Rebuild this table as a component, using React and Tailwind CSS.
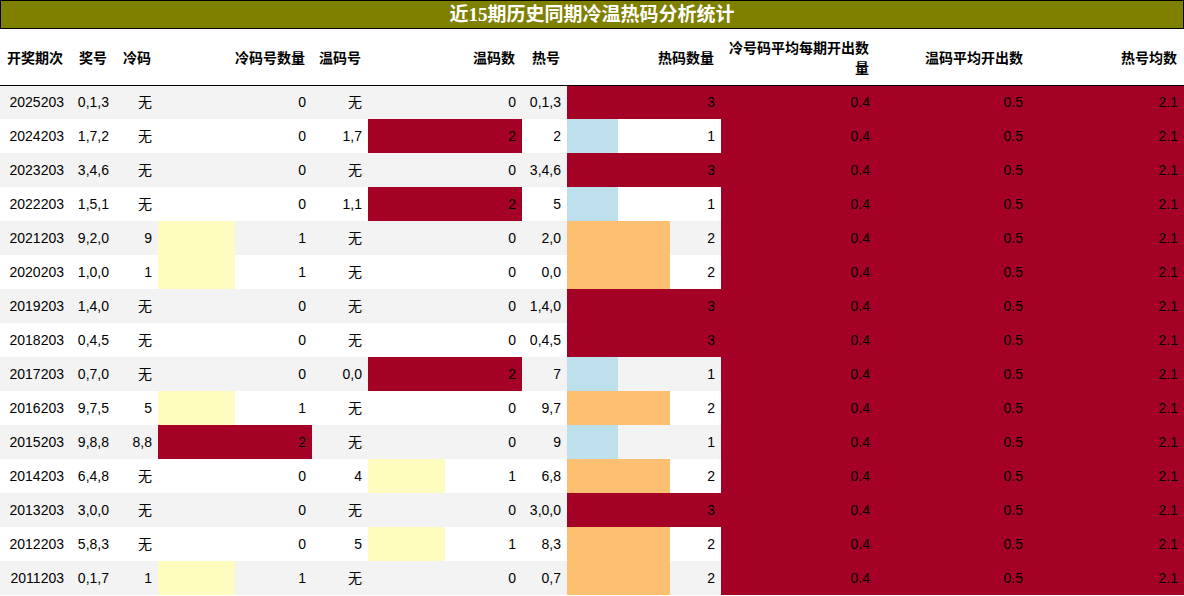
import React from "react";

const RED = "#a50026";
const YELLOW = "#fffcbf";
const BLUE = "#bde0ec";
const ORANGE = "#fdbf72";

const rows = [
  ["2025203", "0,1,3", "无", 0, "无", 0, "0,1,3", 3],
  ["2024203", "1,7,2", "无", 0, "1,7", 2, "2", 1],
  ["2023203", "3,4,6", "无", 0, "无", 0, "3,4,6", 3],
  ["2022203", "1,5,1", "无", 0, "1,1", 2, "5", 1],
  ["2021203", "9,2,0", "9", 1, "无", 0, "2,0", 2],
  ["2020203", "1,0,0", "1", 1, "无", 0, "0,0", 2],
  ["2019203", "1,4,0", "无", 0, "无", 0, "1,4,0", 3],
  ["2018203", "0,4,5", "无", 0, "无", 0, "0,4,5", 3],
  ["2017203", "0,7,0", "无", 0, "0,0", 2, "7", 1],
  ["2016203", "9,7,5", "5", 1, "无", 0, "9,7", 2],
  ["2015203", "9,8,8", "8,8", 2, "无", 0, "9", 1],
  ["2014203", "6,4,8", "无", 0, "4", 1, "6,8", 2],
  ["2013203", "3,0,0", "无", 0, "无", 0, "3,0,0", 3],
  ["2012203", "5,8,3", "无", 0, "5", 1, "8,3", 2],
  ["2011203", "0,1,7", "1", 1, "无", 0, "0,7", 2],
];

const widths = [70, 44, 44, 154, 56, 154, 45, 154, 155, 154, 154];

const headers = [
  "开奖期次",
  "奖号",
  "冷码",
  "冷码号数量",
  "温码号",
  "温码数",
  "热号",
  "热码数量",
  "冷号码平均每期开出数量",
  "温码平均开出数",
  "热号均数",
];

function barColor(value, max) {
  if (value === 0) return "transparent";
  if (max === 3) return value === 3 ? RED : value === 2 ? ORANGE : BLUE;
  return value === 2 ? RED : YELLOW;
}

function BarCell({ value, max }) {
  const pct = (value / max) * 100;
  const color = barColor(value, max);
  return (
    <td
      className="h-[34px] p-0 pr-[6px] text-right align-middle"
      style={{ background: `linear-gradient(to right, ${color} ${pct}%, transparent ${pct}%)` }}
    >
      {value}
    </td>
  );
}

export default function App() {
  return (
    <div
      className="w-[1184px] h-[596px] overflow-hidden bg-white text-black"
      style={{ fontFamily: '"Liberation Sans", "Noto Sans CJK SC", sans-serif' }}
    >
      {/* Title */}
      <div
        className="h-[29px] bg-[#808000] border border-black flex items-center justify-center text-white font-bold text-[19px] leading-none"
        style={{ fontFamily: '"Liberation Serif", "Noto Sans CJK SC", serif' }}
      >
        近15期历史同期冷温热码分析统计
      </div>

      <table className="table-fixed border-collapse w-[1184px] text-[14px]">
        <colgroup>
          {widths.map((w, i) => (
            <col key={i} style={{ width: w }} />
          ))}
        </colgroup>
        <thead>
          <tr className="h-[56px] border-b border-black">
            {headers.map((h, i) => (
              <th key={i} className="p-0 pr-[7px] pt-[2px] text-right align-middle font-bold leading-[20px]">
                {h}
              </th>
            ))}
          </tr>
        </thead>
        <tbody>
          {rows.map((r, idx) => (
            <tr key={r[0]} className={idx % 2 === 0 ? "bg-[#f3f3f3]" : "bg-white"}>
              <td className="h-[34px] p-0 pr-[6px] text-right">{r[0]}</td>
              <td className="h-[34px] p-0 pr-[5px] text-right">{r[1]}</td>
              <td className="h-[34px] p-0 pr-[6px] text-right">{r[2]}</td>
              <BarCell value={r[3]} max={2} />
              <td className="h-[34px] p-0 pr-[6px] text-right">{r[4]}</td>
              <BarCell value={r[5]} max={2} />
              <td className="h-[34px] p-0 pr-[6px] text-right">{r[6]}</td>
              <BarCell value={r[7]} max={3} />
              <td className="h-[34px] p-0 pr-[6px] text-right bg-[#a50026]">0.4</td>
              <td className="h-[34px] p-0 pr-[7px] text-right bg-[#a50026]">0.5</td>
              <td className="h-[34px] p-0 pr-[6px] text-right bg-[#a50026]">2.1</td>
            </tr>
          ))}
        </tbody>
      </table>
    </div>
  );
}
